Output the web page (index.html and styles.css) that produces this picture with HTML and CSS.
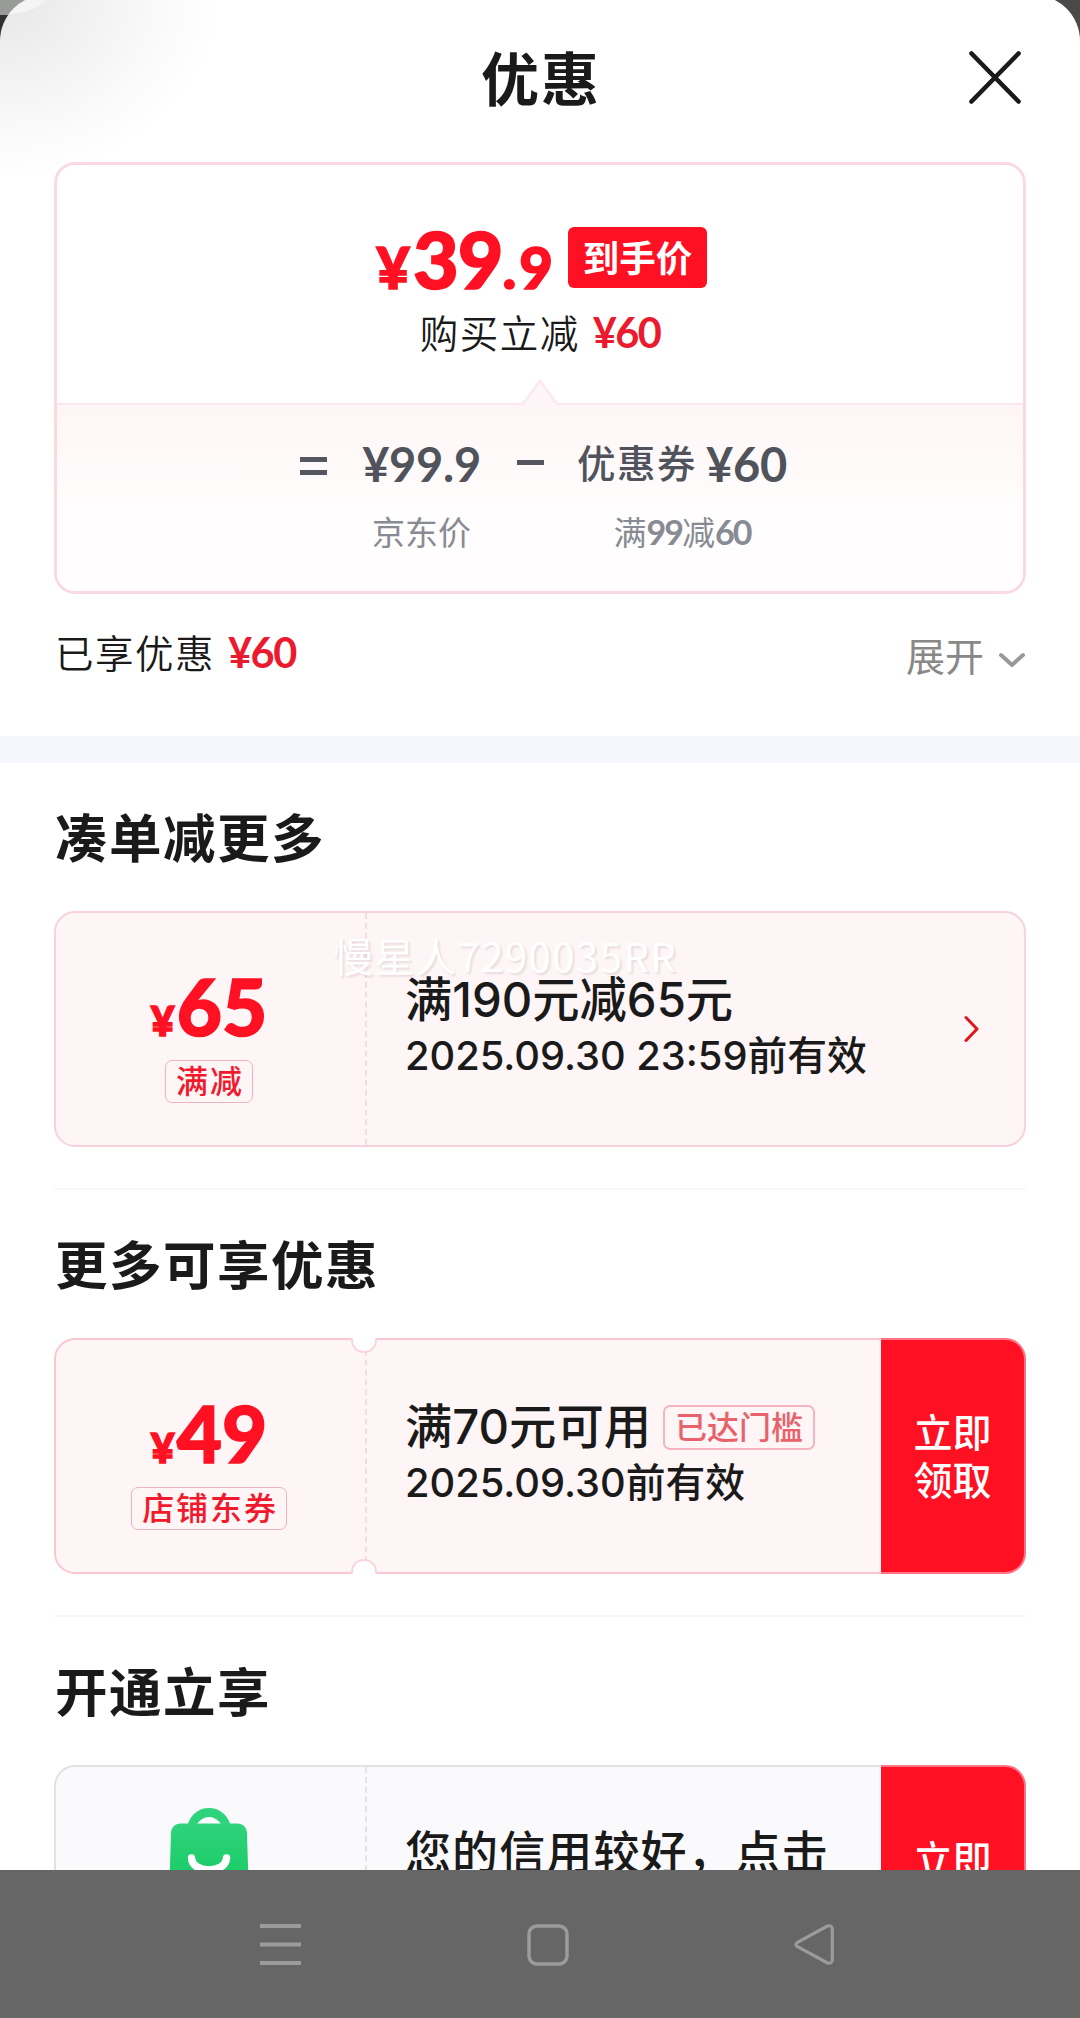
FILE: index.html
```
<!DOCTYPE html>
<html lang="zh-CN">
<head>
<meta charset="utf-8">
<title>优惠</title>
<link rel="stylesheet" href="styles.css">
</head>
<body>
<main class="sheet">
  <header class="sheet-head">
    <h1 class="sheet-title">优惠</h1>
    <svg class="close" width="52" height="54" viewBox="0 0 52 54" fill="none" stroke="#1a1a1a" stroke-width="4.6" stroke-linecap="round"><path d="M2.5 2.5 49.5 50.5M49.5 2.5 2.5 50.5"/></svg>
  </header>

  <section class="summary">
    <div class="summary-top">
      <div class="price-row">
        <span class="price"><span class="price-small">¥</span><span class="price-big">39</span><span class="price-small price-dec">.9</span></span>
        <span class="price-tag">到手价</span>
      </div>
      <div class="saved"><span class="cjk">购买立减</span><span class="amount">¥60</span></div>
      <svg class="caret" width="38" height="27" viewBox="0 0 38 27"><path d="M1 26 19 2 37 26" fill="#fef6f8" stroke="#fbe9ed" stroke-width="2.5"/></svg>
    </div>
    <div class="formula">
      <div class="sign"><svg width="27" height="18" fill="#54575f"><path d="M0 0h27v5H0zM0 13h27v5H0z"/></svg></div>
      <div class="term term-price"><div class="term-value"><span class="num">¥99.9</span></div><div class="term-label">京东价</div></div>
      <div class="sign sign-minus"><svg width="27" height="18" fill="#54575f"><path d="M0 3h27v5H0z"/></svg></div>
      <div class="term term-coupon"><div class="term-value"><span class="cjk">优惠券</span><span class="num">¥60</span></div><div class="term-label">满<b>99</b>减<b>60</b></div></div>
    </div>
  </section>

  <div class="enjoyed">
    <div class="enjoyed-left"><span class="cjk">已享优惠</span><span class="amount">¥60</span></div>
    <div class="expand"><span>展开</span><svg width="28" height="16" viewBox="0 0 28 16" fill="none" stroke="#999" stroke-width="4" stroke-linecap="round" stroke-linejoin="round"><path d="M3 3 14 13 25 3"/></svg></div>
  </div>

  <div class="band"></div>

  <section class="group">
    <h2 class="group-title">凑单减更多</h2>
    <article class="coupon">
      <div class="coupon-value">
        <div class="value"><span class="value-yen">¥</span><span class="value-num">65</span></div>
        <span class="kind">满减</span>
      </div>
      <div class="coupon-body">
        <div class="rule">满190元减65元</div>
        <div class="date">2025.09.30 23:59前有效</div>
      </div>
      <svg class="go" width="17" height="28" viewBox="0 0 17 28" fill="none" stroke="#e0161c" stroke-width="3" stroke-linecap="round" stroke-linejoin="round"><path d="M3 2.5 14 14 3 25.5"/></svg>
      <span class="watermark">慢星人7290035RR</span>
    </article>
  </section>

  <section class="group">
    <h2 class="group-title">更多可享优惠</h2>
    <article class="coupon coupon-ticket">
      <div class="coupon-value">
        <div class="value"><span class="value-yen">¥</span><span class="value-num">49</span></div>
        <span class="kind">店铺东券</span>
      </div>
      <div class="coupon-body">
        <div class="rule">满70元可用<span class="reached">已达门槛</span></div>
        <div class="date">2025.09.30前有效</div>
      </div>
      <button class="claim">立即<br>领取</button>
      <svg class="notch notch-top" width="28" height="17" viewBox="0 0 28 17"><path d="M2 0v3a12 12 0 0 0 24 0V0z" fill="#fff"/><path d="M2 1.5V3a12 12 0 0 0 24 0V1.5" fill="none" stroke="#f9d6de" stroke-width="2"/></svg>
      <svg class="notch notch-bottom" width="28" height="17" viewBox="0 0 28 17"><path d="M2 0v3a12 12 0 0 0 24 0V0z" fill="#fff"/><path d="M2 1.5V3a12 12 0 0 0 24 0V1.5" fill="none" stroke="#f9d6de" stroke-width="2"/></svg>
    </article>
  </section>

  <section class="group group-last">
    <h2 class="group-title">开通立享</h2>
    <article class="coupon coupon-plain">
      <div class="coupon-value coupon-logo">
        <svg width="80" height="84" viewBox="0 0 80 84">
          <defs><linearGradient id="bag" x1="0" y1="0" x2="0" y2="1"><stop offset="0" stop-color="#2fd37c"/><stop offset=".6" stop-color="#1fcd6b"/></linearGradient></defs>
          <path d="M18.500 17C22 6 30 0 40 0s18 6 21.500 17z" fill="#2fd37c"/>
          <path d="M28 16c3-4 7-7 12-7s9 3 12 7z" fill="#fff"/>
          <path d="M12 15.500h56c6 0 10 4 10 10L79.500 74c0 6-4 10-10 10h-59c-6 0-10-4-10-10L2 25.500c0-6 4-10 10-10z" fill="url(#bag)"/>
          <path d="M22.500 50c1 16 34 16 35 0" fill="none" stroke="#fff" stroke-width="7.500" stroke-linecap="round"/>
        </svg>
      </div>
      <div class="coupon-body">
        <div class="rule rule-text">您的信用较好，点击</div>
      </div>
      <button class="claim">立即<br>领取</button>
    </article>
  </section>
</main>

<nav class="sysbar">
  <svg width="41" height="41" fill="#9b9b9b"><path d="M0 0h41v4H0zM0 18.500h41v4H0zM0 37h41v4H0z"/></svg>
  <svg width="42" height="42" fill="none" stroke="#9b9b9b" stroke-width="3.500"><rect x="2" y="2" width="38" height="38" rx="8"/></svg>
  <svg width="42" height="42" viewBox="0 0 42 42" fill="none" stroke="#9b9b9b" stroke-width="3.200" stroke-linejoin="round"><path d="M2.500 18.300 32.500 2Q37 1 37.300 5V36Q37 40 32.500 39L2.500 22.700Q-1 20.500 2.500 18.300z"/></svg>
</nav>
</body>
</html>
```
FILE: styles.css
```
* { box-sizing: border-box; }

body {
  margin: 0;
  width: 1080px;
  height: 2018px;
  overflow: hidden;
  display: flex;
  flex-direction: column;
  font-family: "Inter", "Noto Sans CJK SC", sans-serif;
  color: #1a1a1a;
  background: linear-gradient(90deg, transparent 50%, #4a4a49 50%), linear-gradient(#989b98 15px, #2e332e 15px);
}

h1, h2 { margin: 0; font-family: "Noto Sans CJK SC", sans-serif; }
svg { display: block; flex: none; overflow: visible; }

.sheet {
  height: 1875px;
  margin-top: -5px;
  flex: none;
  overflow: hidden;
  border-radius: 46px 46px 0 0;
  background:
    radial-gradient(ellipse 46px 20px at 2px 0, #f4f4f4 95%, transparent 100%),
    radial-gradient(ellipse 220px 185px at 0 0, #e6e6e6 0, #f1f1f1 40%, #fafafa 75%, #fff 100%),
    #fff;
}

.sheet-head {
  position: relative;
  height: 167px;
  display: flex;
  justify-content: center;
}
.sheet-title {
  margin-top: 41px;
  padding-left: 2px;
  font-size: 58px;
  line-height: 80px;
  font-weight: 600;
  letter-spacing: 2px;
}
.close { position: absolute; left: 969px; top: 56px; }

.summary {
  margin: 0 54px;
  height: 432px;
  border: 3px solid #fbd9e1;
  border-radius: 21px;
  background: #fff;
  overflow: hidden;
}
.summary-top {
  position: relative;
  height: 240px;
  padding-top: 62px;
  border-bottom: 2px solid #fbe8ec;
}
.price-row { display: flex; justify-content: flex-end; padding-right: 316px; height: 66px; gap: 12px; }
.price {
  display: flex;
  align-items: baseline;
  line-height: 66px;
  margin-top: -1px;
  color: #ff1022;
  font-family: "Lato", sans-serif;
  font-weight: 900;
  -webkit-text-stroke: 1.500px #ff1022;
}
.price-small { font-size: 58px; letter-spacing: 3px; }
.price-big { font-size: 79px; letter-spacing: -1px; }
.price-tag {
  width: 139px;
  height: 61px;
  border-radius: 6px;
  background: #ff1022;
  color: #fff;
  font: 600 36.500px/59px "Noto Sans CJK SC", sans-serif;
  text-align: center;
}
.saved { display: flex; justify-content: center; align-items: baseline; line-height: 54px; margin-top: 11px; gap: 13px; }
.cjk { font-family: "Noto Sans CJK SC", sans-serif; font-size: 38.500px; letter-spacing: 1.500px; font-weight: 350; }
.amount { font: 700 41.500px/54px "Lato", sans-serif; color: #ec1a2e; letter-spacing: -1.500px; }
.caret { position: absolute; left: 464px; top: 214px; }

.formula {
  height: 190px;
  padding: 34px 0 0 243px;
  display: flex;
  background: linear-gradient(#fef5f6, #fffdfd 55%, #fffdfd);
  color: #50535b;
}
.sign { width: 27px; padding-top: 18px; }
.term { display: flex; flex-direction: column; align-items: center; }
.term-price { width: 189px; }
.sign-minus { margin-left: 1px; }
.term-coupon { width: 276px; }
.term-value { display: flex; align-items: center; height: 56px; line-height: 56px; gap: 9px; margin-top: -3px; }
.term-value .cjk { font-weight: 500; margin-top: -6px; }
.num { font: 700 47px/56px "Lato", sans-serif; letter-spacing: -0.300px; }
.term-label { margin-top: 15px; font: 400 33px/48px "Noto Sans CJK SC", sans-serif; color: #888b93; }
.term-label b { font: 700 34px "Lato", sans-serif; letter-spacing: -2px; }

.enjoyed {
  margin: 0 54px;
  height: 142px;
  display: flex;
  justify-content: space-between;
}
.enjoyed-left { display: flex; align-items: baseline; height: 54px; line-height: 54px; padding-left: 1px; margin-top: 30px; gap: 13px; }
.expand { display: flex; align-items: center; height: 54px; margin-top: 33px; gap: 14px; color: #888; }
.expand span { font: 400 39px/54px "Noto Sans CJK SC", sans-serif; }
.expand svg { margin-top: 11px; }

.band { height: 27px; background: #f5f7fc; }

.group { margin: 0 54px; height: 427px; padding-top: 33px; border-bottom: 2px solid #f8f8f8; }
.group-last { border: 0; }
.group-title { height: 78px; line-height: 78px; padding-left: 1px; font-size: 52.500px; font-weight: 600; letter-spacing: 1.500px; }

.coupon {
  position: relative;
  margin-top: 37px;
  height: 236px;
  display: flex;
  border: 2px solid #f7d2da;
  border-radius: 21px;
  background: #fef5f6;
}
.coupon-value {
  width: 311px;
  display: flex;
  flex-direction: column;
  align-items: center;
  padding: 53px 3px 0 0;
  border-right: 2px dashed #f3dde0;
}
.value { display: flex; align-items: baseline; height: 80px; line-height: 80px; font-family: "Lato", sans-serif; font-weight: 900; color: #ff1022; -webkit-text-stroke: 1.500px #ff1022; }
.value-yen { font-size: 41px; letter-spacing: 2px; }
.value-num { font-size: 78px; }
.kind {
  margin-top: 14px;
  padding: 0 8px 0 10px;
  height: 43px;
  border: 1px solid #eeb4bd;
  border-radius: 7px;
  font: 500 32px/36px "Noto Sans CJK SC", sans-serif;
  letter-spacing: 1.900px;
  color: #f01a2c;
}
.coupon-body { flex: 1; padding: 57px 0 0 38px; white-space: nowrap; }
.rule { height: 60px; line-height: 60px; font-size: 47.300px; font-weight: 450; display: flex; align-items: center; }
.date { height: 50px; line-height: 52px; font-size: 39.800px; font-weight: 450; }
.go { position: absolute; left: 907px; top: 102px; }
.watermark {
  position: absolute;
  left: 277px;
  top: 12px;
  font: 400 40px/60px "Noto Sans CJK SC", sans-serif;
  letter-spacing: 1.500px;
  color: #fff;
  text-shadow: 2px 2px 2px rgba(150, 110, 120, .18);
}

.coupon-ticket { border-color: #fbc6d1; }
.reached {
  margin-left: 12px;
  height: 45px;
  width: 152px;
  border: 2px solid #f5b5c0;
  border-radius: 7px;
  font: 500 32px/37px "Noto Sans CJK SC", sans-serif;
  text-align: center;
  color: #e8626c;
}
.claim {
  width: 145px;
  margin: -2px -2px -2px 0;
  padding: 0 0 4px;
  border: 2px solid #ff7484;
  border-left: 0;
  border-radius: 0 21px 21px 0;
  background: #ff1022;
  color: #fff;
  font: 500 39px/48px "Noto Sans CJK SC", sans-serif;
}
.notch { position: absolute; left: 294px; }
.notch-top { top: -3px; }
.notch-bottom { bottom: -3px; transform: scaleY(-1); }

.coupon-plain { border-color: #e2e2e4; background: #fafafd; }
.coupon-plain .coupon-value { border-color: #e4e4e8; }
.coupon-plain .coupon-logo { padding-top: 41px; }
.rule-text { font-family: "Noto Sans CJK SC", sans-serif; font-size: 46px; letter-spacing: 1.100px; margin-top: -5px; }

.sysbar {
  height: 148px;
  flex: none;
  display: flex;
  gap: 226px;
  padding: 54px 0 0 260px;
  background: #666;
}
```
